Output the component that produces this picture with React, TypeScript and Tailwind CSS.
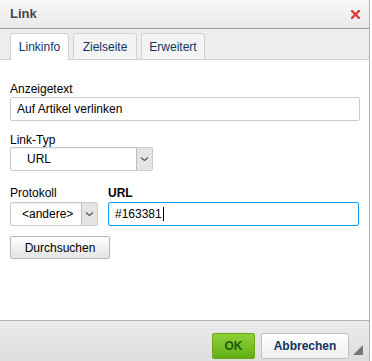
import React from "react";

function Chevron() {
    return (
        <svg width="9" height="6" viewBox="0 0 9 6" fill="none">
            <path d="M1 1.5 L4.5 4.5 L8 1.5" stroke="#555" strokeWidth="1.2" />
        </svg>
    );
}

function Select({ value, width, pad }: { value: string; width: string; pad: string }) {
    return (
        <div className={`flex h-[24px] ${width} rounded-[2px] border border-[#c9cccf] bg-white shadow-[inset_0_1px_0_#f0f0f0]`}>
            <div className={`flex flex-1 items-center ${pad} text-[12px] text-black`}>{value}</div>
            <div className="flex w-[16px] items-center justify-center border-l border-[#bcbcbc] bg-[#e4e4e4]">
                <Chevron />
            </div>
        </div>
    );
}

export default function App() {
    return (
        <div className="h-[361px] w-[372px] bg-white" style={{ fontFamily: '"Liberation Sans", Arial, sans-serif' }}>
            <div className="flex h-[361px] w-[370px] flex-col border-r border-[#b3b3b3]">
                <div className="flex h-[29px] items-center justify-between border-b border-[#999] bg-gradient-to-b from-[#f8f8f8] to-[#e9e9e9] pl-[10px] pr-[9px]">
                    <span className="text-[13px] font-bold text-[#474747]">Link</span>
                    <svg width="9" height="9" viewBox="0 0 9 9">
                        <path d="M1 1 L8 8 M8 1 L1 8" stroke="#e23b3b" strokeWidth="2.4" strokeLinecap="square" />
                    </svg>
                </div>
                <div className="flex h-[31px] items-end gap-[4px] border-b border-[#d1d1d1] bg-[#ededed] px-[10px]">
                    <div className="-mb-px flex h-[27px] w-[59px] items-center justify-center rounded-t-[3px] border border-b-0 border-[#d1d1d1] bg-white text-[12px] text-[#0e3460]">Linkinfo</div>
                    <div className="flex h-[26px] w-[64px] items-center justify-center rounded-t-[3px] border border-b-0 border-[#d1d1d1] bg-[#f4f4f4] text-[12px] text-[#0e3460]">Zielseite</div>
                    <div className="flex h-[26px] w-[64px] items-center justify-center rounded-t-[3px] border border-b-0 border-[#d1d1d1] bg-[#f4f4f4] text-[12px] text-[#0e3460]">Erweitert</div>
                </div>
                <div className="flex flex-1 flex-col bg-white px-[10px] pt-[22px] text-[12px] text-black">
                    <div className="leading-[14px]">Anzeigetext</div>
                    <div className="mt-[1px] flex h-[24px] w-[350px] items-center rounded-[2px] border border-[#c9cccf] px-[6px]">Auf Artikel verlinken</div>
                    <div className="mt-[12px] leading-[14px]">Link-Typ</div>
                    <div>
                        <Select value="URL" width="w-[143px]" pad="pl-[16px]" />
                    </div>
                    <div className="mt-[15px] flex gap-[10px]">
                        <div className="flex flex-col">
                            <div className="leading-[14px]">Protokoll</div>
                            <div className="mt-[2px]">
                                <Select value="<andere>" width="w-[88px]" pad="pl-[11px]" />
                            </div>
                        </div>
                        <div className="flex flex-1 flex-col">
                            <div className="font-bold leading-[14px]">URL</div>
                            <div className="mt-[2px] flex h-[24px] items-center rounded-[2px] border border-[#139ff7] px-[6px]">
                                #163381<span className="ml-px h-[14px] w-px bg-black" />
                            </div>
                        </div>
                    </div>
                    <div className="mt-[10px] flex h-[23px] w-[100px] items-center justify-center rounded-[2px] border border-[#b6b6b6] bg-gradient-to-b from-[#fff] to-[#e4e4e4] text-[12px]">
                        Durchsuchen
                    </div>
                </div>
                <div className="relative flex h-[41px] items-start justify-end gap-[6px] border-t border-[#b2b2b2] bg-gradient-to-b from-[#ebebeb] to-[#dedede] pr-[20px] pt-[12px]">
                    <div className="flex h-[26px] w-[43px] items-center justify-center rounded-[2px] border border-[#6ea515] bg-gradient-to-b from-[#8ed137] to-[#62b014] text-[12px] font-bold text-[#26570f]">OK</div>
                    <div className="flex h-[26px] w-[88px] items-center justify-center rounded-[2px] border border-[#c0c0c0] bg-gradient-to-b from-white to-[#eeeeee] text-[12px] font-bold text-[#0e3460]">Abbrechen</div>
                    <svg className="absolute bottom-[6px] right-[6px]" width="10" height="10" viewBox="0 0 10 10">
                        <polygon points="10,0 10,10 0,10" fill="#777" />
                    </svg>
                </div>
            </div>
        </div>
    );
}
